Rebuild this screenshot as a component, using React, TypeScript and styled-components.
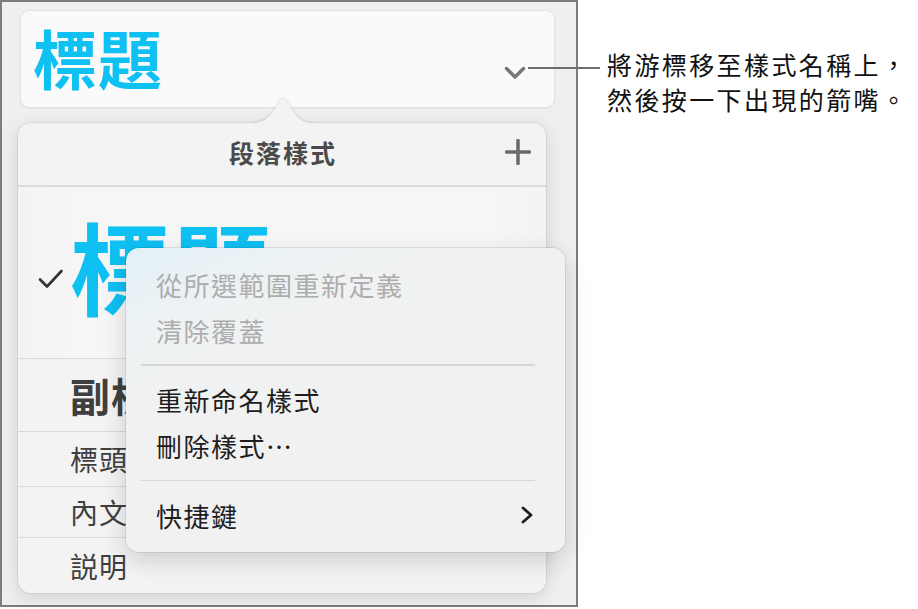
import React from "react";
import styled, { createGlobalStyle, css } from "styled-components";

const GlobalStyle = createGlobalStyle`
  body {
    margin: 0;
    background: #ffffff;
    font-family: "Noto Sans CJK TC", "Noto Sans", sans-serif;
  }
`;

const App: React.FC = () => {
  return (
    <Page>
      <GlobalStyle />
      <Frame>
        <StyleField>
          <FieldTitle>標題</FieldTitle>
          <FieldChevron viewBox="0 0 22 14">
            <path d="M2.5 2.5 L11 11 L19.5 2.5" />
          </FieldChevron>
        </StyleField>

        <Popover>
          <PopArrow viewBox="0 0 80 27">
            <path d="M0 27 C14 27 22 25 28 17 L37 4 Q40 0 43 4 L52 17 C58 25 66 27 80 27 Z" />
          </PopArrow>
          <PopHeader>
            <span />
            <PopTitle>段落樣式</PopTitle>
            <PlusIcon viewBox="0 0 26 26">
              <path d="M13 1.5 V24.5 M1.5 13 H24.5" />
            </PlusIcon>
          </PopHeader>

          <StyleRow $size="big" $selected>
            <Check viewBox="0 0 26 20">
              <path d="M2 10.5 L9 17.5 L23.5 2" />
            </Check>
            <RowText $size="big">標題</RowText>
          </StyleRow>
          <StyleRow $size="sub">
            <RowText $size="sub">副標題</RowText>
          </StyleRow>
          <StyleRow $size="head">
            <RowText $size="small">標頭</RowText>
          </StyleRow>
          <StyleRow $size="body">
            <RowText $size="small">內文</RowText>
          </StyleRow>
          <StyleRow $size="last" $last>
            <RowText $size="small">説明</RowText>
          </StyleRow>

          <Menu>
            <MenuItem $disabled>從所選範圍重新定義</MenuItem>
            <MenuItem $disabled>清除覆蓋</MenuItem>
            <MenuDivider />
            <MenuItem>重新命名樣式</MenuItem>
            <MenuItem>刪除樣式⋯</MenuItem>
            <MenuDivider />
            <MenuItem>
              快捷鍵
              <SubChevron viewBox="0 0 12 18">
                <path d="M2 2 L10 9 L2 16" />
              </SubChevron>
            </MenuItem>
          </Menu>
        </Popover>
      </Frame>

      <Callout>
        <CalloutLine>將游標移至樣式名稱上，</CalloutLine>
        <CalloutLine>然後按一下出現的箭嘴。</CalloutLine>
      </Callout>
      <Leader />
    </Page>
  );
};

const Page = styled.div`
  position: relative;
  display: flex;
  width: 918px;
  height: 609px;
  overflow: hidden;
`;

const Frame = styled.div`
  box-sizing: border-box;
  width: 578px;
  height: 607px;
  flex-shrink: 0;
  border: 2px solid #7c7c7c;
  background: #efefef;
  padding-top: 8px;
  display: flex;
  flex-direction: column;
`;

const StyleField = styled.div`
  box-sizing: border-box;
  margin-left: 18px;
  width: 535px;
  height: 98px;
  border: 1px solid #e2e2e2;
  border-radius: 9px;
  background: #fafafa;
  box-shadow: 0 1px 2px rgba(0, 0, 0, 0.04);
  display: flex;
  align-items: center;
  justify-content: space-between;
  padding: 0 28px 0 12px;
`;

const FieldTitle = styled.span`
  font-size: 64px;
  font-weight: 700;
  letter-spacing: 1px;
  color: #0fc0f2;
  line-height: 1;
  margin-top: -6px;
`;

const FieldChevron = styled.svg`
  width: 22px;
  height: 14px;
  margin-top: 28px;
  fill: none;
  stroke: #777777;
  stroke-width: 3.5;
  stroke-linecap: round;
  stroke-linejoin: round;
`;

const Popover = styled.div`
  position: relative;
  margin-top: 15px;
  margin-left: 16px;
  width: 528px;
  height: 470px;
  border-radius: 13px;
  background: #f3f3f3;
  box-shadow: 0 0 0 1px rgba(0, 0, 0, 0.05), 0 4px 18px rgba(0, 0, 0, 0.13);
  display: flex;
  flex-direction: column;
`;

const PopArrow = styled.svg`
  position: absolute;
  top: -26px;
  left: 225px;
  width: 80px;
  height: 27px;
  fill: #f3f3f3;
  filter: drop-shadow(0 -1px 1px rgba(0, 0, 0, 0.12));
`;

const PopHeader = styled.div`
  box-sizing: border-box;
  height: 64px;
  flex-shrink: 0;
  border-bottom: 2px solid #dcdcdc;
  display: grid;
  grid-template-columns: 1fr auto 1fr;
  align-items: center;
  padding-bottom: 4px;
`;

const PopTitle = styled.span`
  font-size: 25px;
  font-weight: 700;
  letter-spacing: 2px;
  color: #4a4a4a;
  margin-left: 2px;
`;

const PlusIcon = styled.svg`
  justify-self: end;
  margin-right: 15px;
  width: 26px;
  height: 26px;
  fill: none;
  stroke: #6a6a6a;
  stroke-width: 3.5;
  stroke-linecap: round;
`;

const rowHeights = {
  big: 172,
  sub: 73,
  head: 55,
  body: 51,
  last: 55,
};

const StyleRow = styled.div<{
  $size: keyof typeof rowHeights;
  $selected?: boolean;
  $last?: boolean;
}>`
  box-sizing: border-box;
  position: relative;
  flex-shrink: 0;
  height: ${({ $size }) => rowHeights[$size]}px;
  display: flex;
  align-items: center;
  padding-left: 52px;
  ${({ $last }) =>
    $last
      ? css`
          border-bottom: none;
        `
      : css`
          border-bottom: 1.5px solid #d9d9d9;
        `}
  ${({ $selected }) =>
    $selected &&
    css`
      padding-bottom: 16px;
      background: linear-gradient(90deg, #f3f3f3 0%, #f6f6f6 10%, #f6f6f6 90%, #f3f3f3 100%);
    `}
`;

const Check = styled.svg`
  position: absolute;
  left: 20px;
  top: 82px;
  width: 26px;
  height: 20px;
  fill: none;
  stroke: #333333;
  stroke-width: 2.6;
  stroke-linecap: round;
  stroke-linejoin: round;
`;

const RowText = styled.span<{ $size: "big" | "sub" | "small" }>`
  line-height: 1;
  color: #3d3d3d;
  ${({ $size }) =>
    $size === "big"
      ? css`
          font-size: 100px;
          font-weight: 700;
          letter-spacing: 2px;
          color: #0fc0f2;
        `
      : $size === "sub"
      ? css`
          font-size: 40px;
          font-weight: 700;
          letter-spacing: 1px;
          color: #3f3f3f;
        `
      : css`
          font-size: 28px;
          font-weight: 400;
          letter-spacing: 1px;
          color: #3f3f3f;
        `}
`;

const Menu = styled.div`
  position: absolute;
  left: 108px;
  top: 125px;
  box-sizing: border-box;
  width: 439px;
  height: 304px;
  padding: 13px 0 11px;
  border-radius: 13px;
  background: linear-gradient(155deg, #e3f1f7 0%, #eff2f3 22%, #f1f1f1 45%, #f1f1f1 100%);
  box-shadow: 0 0 0 1px rgba(0, 0, 0, 0.08), 0 8px 24px rgba(0, 0, 0, 0.16);
  display: flex;
  flex-direction: column;
`;

const MenuItem = styled.div<{ $disabled?: boolean }>`
  height: 46px;
  flex-shrink: 0;
  display: flex;
  align-items: center;
  justify-content: space-between;
  padding: 0 32px 0 30px;
  font-size: 26px;
  letter-spacing: 1.5px;
  color: ${({ $disabled }) => ($disabled ? "#adadad" : "#1e1e1e")};
`;

const MenuDivider = styled.div`
  height: 1.5px;
  margin: 11px 30px 11px 15px;
  background: #d6d6d6;
`;

const SubChevron = styled.svg`
  width: 12px;
  height: 18px;
  fill: none;
  stroke: #1e1e1e;
  stroke-width: 2.8;
  stroke-linecap: round;
  stroke-linejoin: round;
`;

const Callout = styled.div`
  padding: 47px 0 0 29px;
  display: flex;
  flex-direction: column;
`;

const CalloutLine = styled.span`
  font-size: 25px;
  line-height: 35px;
  letter-spacing: 2.4px;
  color: #111111;
  white-space: nowrap;
`;

const Leader = styled.div`
  position: absolute;
  left: 528px;
  top: 67px;
  width: 72px;
  height: 2px;
  background: #6e6e6e;
`;

export default App;
